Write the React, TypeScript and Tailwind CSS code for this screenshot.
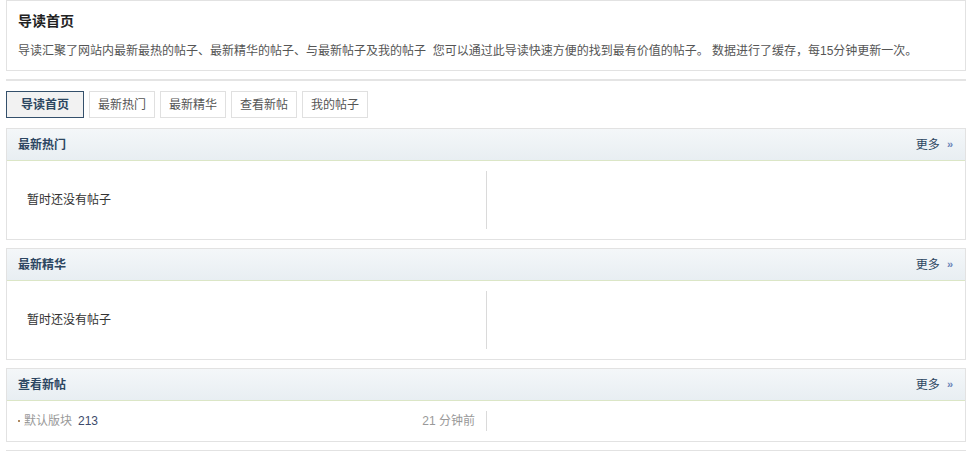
import React from "react";

const font = "font-['Liberation_Sans','Noto_Sans_CJK_SC',sans-serif]";

const tabs = ["导读首页", "最新热门", "最新精华", "查看新帖", "我的帖子"];

const SectionHeader = ({ title }: { title: string }) => (
  <div className="flex h-[32px] items-center justify-between border-b border-[#dbe6c6] bg-gradient-to-b from-[#f4f7f9] to-[#e8eef2] pl-[11px] pr-[12px]">
    <span className="text-[12px] font-bold text-[#2c4661]">{title}</span>
    <a className="flex items-center gap-[7px] text-[12px] text-[#2c4661]">
      更多
      <span className="text-[11px] font-bold text-[#6a83b8]">»</span>
    </a>
  </div>
);

const EmptySection = ({ title }: { title: string }) => (
  <div className="border border-[#e2e2e2] bg-white">
    <SectionHeader title={title} />
    <div className="flex h-[78px] items-center">
      <div className="flex h-[58px] w-[480px] items-center border-r border-[#dadada] pl-[20px] text-[12px] text-[#333]">
        暂时还没有帖子
      </div>
    </div>
  </div>
);

export default function App() {
  return (
    <div className={`${font} min-h-[456px] bg-white`}>
      <div className="ml-[6px] w-[960px]">
        <div className="h-[71px] border border-[#e2e2e2] px-[11px]">
          <h1 className="mt-[10px] text-[14px] font-bold leading-[20px] text-[#222]">导读首页</h1>
          <p className="mt-[11px] text-[12px] leading-[18px] text-[#555]">
            导读汇聚了网站内最新最热的帖子、最新精华的帖子、与最新帖子及我的帖子&nbsp; 您可以通过此导读快速方便的找到最有价值的帖子。 数据进行了缓存，每15分钟更新一次。
          </p>
        </div>

        <div className="mt-[8px] h-[2px] bg-[#e4e4e4]" />

        <div className="mt-[10px] flex gap-[5px]">
          {tabs.map((t, i) => (
            <div
              key={t}
              className={
                i === 0
                  ? "flex h-[27px] w-[78px] items-center justify-center border border-[#34506b] bg-[#f2f2f2] text-[12px] font-bold text-[#2c4661]"
                  : "flex h-[27px] w-[66px] items-center justify-center border border-[#e0e0e0] bg-white text-[12px] text-[#555]"
              }
            >
              {t}
            </div>
          ))}
        </div>

        <div className="mt-[10px] flex flex-col gap-[8px]">
          <EmptySection title="最新热门" />
          <EmptySection title="最新精华" />
          <div className="border border-[#e2e2e2] bg-white">
            <SectionHeader title="查看新帖" />
            <div className="flex h-[40px] items-center">
              <div className="flex h-[20px] w-[480px] items-center justify-between border-r border-[#dadada] pl-[11px] pr-[11px] text-[12px]">
                <span className="flex items-center">
                  <span className="mr-[4px] h-[2px] w-[2px] bg-[#b08a60]" />
                  <span className="text-[#999]">默认版块</span>
                  <span className="ml-[6px] text-[#3d4a6b]">213</span>
                </span>
                <span className="text-[#999]">21 分钟前</span>
              </div>
            </div>
          </div>
          <div className="h-[6px] border-t border-[#e2e2e2]" />
        </div>
      </div>
    </div>
  );
}
